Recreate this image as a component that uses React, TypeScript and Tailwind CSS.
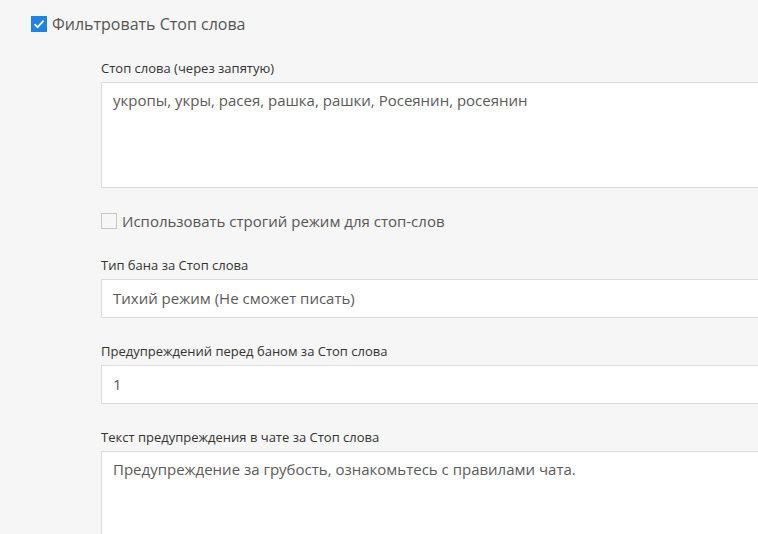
import React from "react";

const font = { fontFamily: '"Open Sans", "Noto Sans", sans-serif' };

function CheckBox({ checked }: { checked: boolean }) {
  if (checked) {
    return (
      <span className="w-4 h-4 bg-[#1e82e6] flex items-center justify-center shrink-0">
        <svg width="12" height="12" viewBox="0 0 12 12">
          <path d="M1.5 6.2 L4.6 9.2 L10.6 2.6" fill="none" stroke="#fff" strokeWidth="1.8" />
        </svg>
      </span>
    );
  }
  return <span className="w-4 h-4 border border-[#c8c8c8] bg-[#f6f6f6] shrink-0" />;
}

export default function App() {
  return (
    <div className="w-[758px] h-[534px] overflow-hidden bg-[#f6f6f6] text-[#555]" style={font}>
      <div className="pt-4 pl-[31px]">
        <label className="flex items-center gap-[5px] text-[16px] leading-[16px] text-[#555]">
          <CheckBox checked />
          <span>Фильтровать Стоп слова</span>
        </label>
      </div>
      <div className="pl-[101px] pt-[27px] flex flex-col w-[900px]">
        <div className="text-[13px] leading-[18px] text-[#333]">Стоп слова (через запятую)</div>
        <div className="mt-[5px] h-[106px] bg-white border border-[#dcdcdc] px-[11px] pt-[6px] text-[15px] leading-[22px] text-[#5a5a5a]">
          укропы, укры, расея, рашка, рашки, Росеянин, росеянин
        </div>
        <label className="mt-[25px] flex items-center gap-[5px] text-[15px] leading-[16px] text-[#555]">
          <CheckBox checked={false} />
          <span>Использовать строгий режим для стоп-слов</span>
        </label>
        <div className="mt-[27px] text-[13px] leading-[18px] text-[#333]">Тип бана за Стоп слова</div>
        <div className="mt-[5px] h-[39px] bg-white border border-[#dcdcdc] px-[11px] flex items-center text-[15px] text-[#5a5a5a]">
          Тихий режим (Не сможет писать)
        </div>
        <div className="mt-[24px] text-[13px] leading-[18px] text-[#333]">Предупреждений перед баном за Стоп слова</div>
        <div className="mt-[5px] h-[39px] bg-white border border-[#dcdcdc] px-[11px] flex items-center text-[15px] text-[#5a5a5a]">
          1
        </div>
        <div className="mt-[24px] text-[13px] leading-[18px] text-[#333]">Текст предупреждения в чате за Стоп слова</div>
        <div className="mt-[5px] h-[106px] bg-white border border-[#dcdcdc] px-[11px] pt-[6px] text-[15px] leading-[22px] text-[#5a5a5a]">
          Предупреждение за грубость, ознакомьтесь с правилами чата.
        </div>
      </div>
    </div>
  );
}
